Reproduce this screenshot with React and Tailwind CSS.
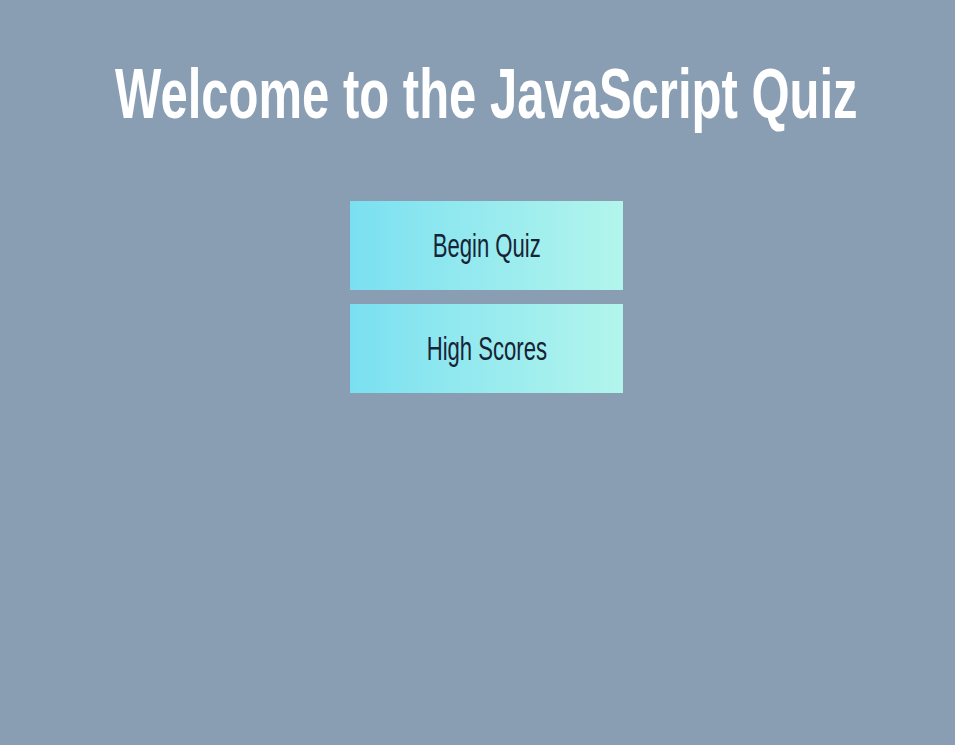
const buttons = ["Begin Quiz", "High Scores"];

const App = () => {
	return (
		<div
			className="min-h-[745px] w-full overflow-hidden bg-[#8a9eb3] flex flex-col items-center pl-[18px]"
			style={{ fontFamily: '"Liberation Sans", Arial, sans-serif' }}
		>
			<h1 className="mt-[59px] h-[70px] w-[743px] flex justify-center text-[70px] leading-none font-bold text-white whitespace-nowrap">
				<span className="inline-block shrink-0 scale-x-[0.7]">Welcome to the JavaScript Quiz</span>
			</h1>
			<div className="mt-[72px] flex flex-col gap-[14px]">
				{buttons.map((label) => (
					<button
						key={label}
						className="w-[273px] h-[89px] flex items-center justify-center bg-gradient-to-r from-[#7ae0f1] to-[#b2f5ec] text-[#162436] text-[33px] leading-none"
					>
						<span className="inline-block scale-x-[0.67] whitespace-nowrap">{label}</span>
					</button>
				))}
			</div>
		</div>
	);
};

export default App;
